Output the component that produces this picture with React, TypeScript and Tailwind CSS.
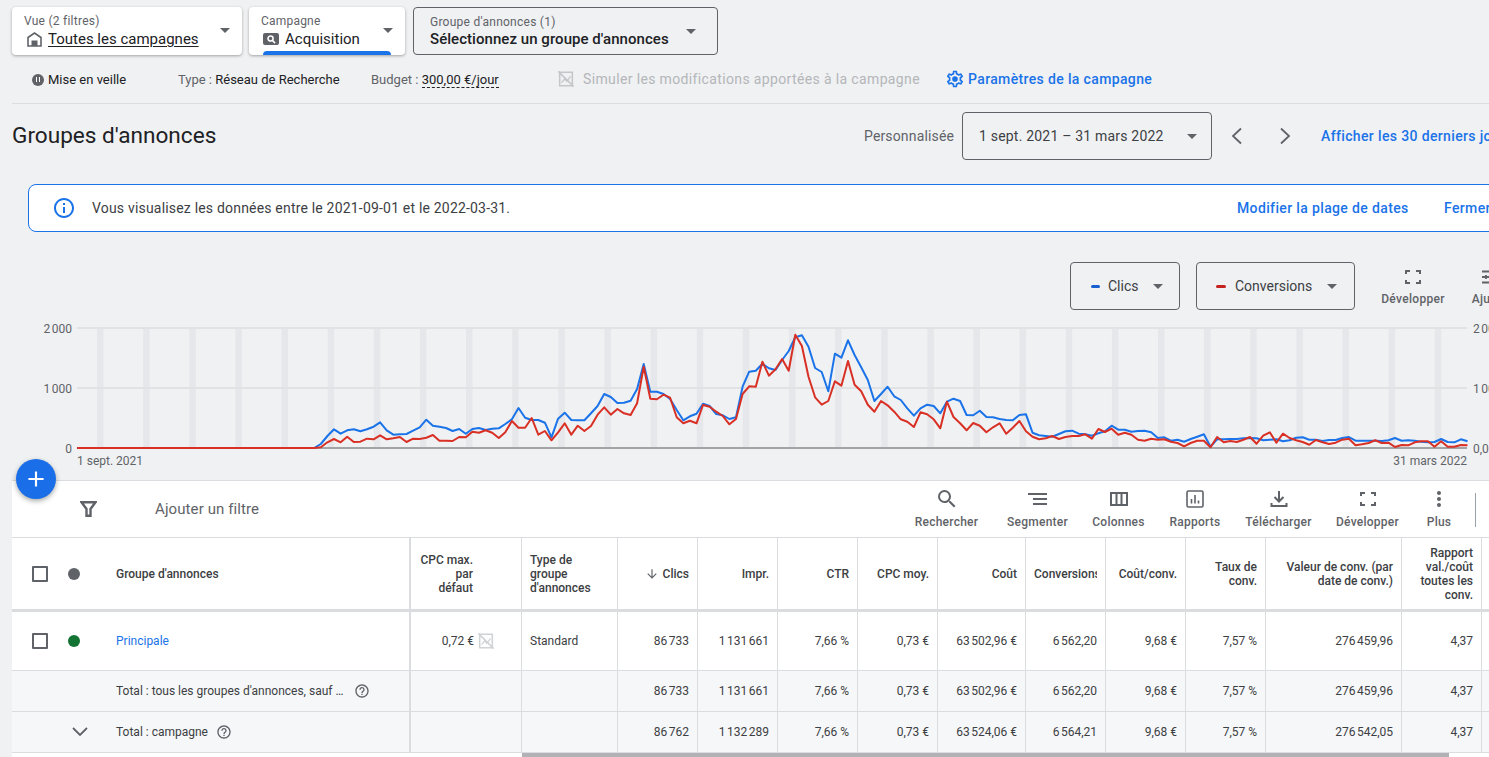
import React from "react";
import { MdSearch, MdMoreVert, MdInfoOutline, MdHelpOutline, MdOutlineAdd, MdArrowDownward } from "react-icons/md";

const blueTop = [384,372,348,328,341,331,328,334,328,320,307,331,344,343,342,332,322,299,317,320,324,333,327,341,327,324,330,326,325,312,298,264,293,300,300,308,352,296,278,300,301,301,280,258,222,231,249,248,242,207,132,215,215,222,237,270,301,289,281,251,258,282,286,297,292,200,155,152,131,145,150,120,93,52,46,80,144,156,214,101,113,61,105,142,180,243,222,200,229,240,265,287,265,254,258,280,245,236,243,285,286,272,291,292,297,300,301,285,283,338,346,348,350,342,334,332,341,343,347,340,334,317,329,329,335,333,332,337,354,352,362,359,365,357,350,343,380,358,358,357,357,355,354,355,361,359,358,364,361,353,352,359,359,363,360,360,354,351,362,362,362,362,363,361,354,362,361,362,365,367,366,357,366,367,358,364];
const redTop = [384,382,367,357,367,350,366,365,356,358,346,358,355,351,366,356,357,353,345,362,362,363,351,352,335,338,331,338,354,337,303,323,323,294,344,333,361,337,310,344,317,333,318,284,262,284,267,280,285,250,140,236,238,224,233,292,310,302,310,255,260,275,288,313,297,222,199,200,125,167,148,117,152,44,78,170,232,254,243,184,197,123,194,214,254,275,243,256,275,298,305,321,277,283,298,325,245,291,310,331,309,317,337,322,310,341,323,303,334,350,358,355,348,357,351,348,348,343,356,327,336,326,344,338,344,359,362,356,359,358,365,369,379,369,362,362,382,351,367,363,366,359,351,371,347,337,368,341,354,361,366,374,360,367,372,368,359,356,376,373,369,361,369,368,381,375,376,367,364,364,380,364,380,380,375,376];

const toPoints = (vals: number[]) => {
  const flat = "77,128 ";
  return flat + vals.map((v, i) => `${(77 + (i + 36) * 6.59).toFixed(1)},${(v / 3).toFixed(1)}`).join(" ");
};

const Caret = ({ className = "" }: { className?: string }) => (
  <svg width="10" height="5" viewBox="0 0 10 5" className={`shrink-0 ${className}`}><path d="M0 0h10L5 5z" fill="#5f6368" /></svg>
);

const NoSim = ({ size = 18, color = "#c4c7ca" }: { size?: number; color?: string }) => (
  <svg width={size} height={size} viewBox="0 0 20 20" fill="none" stroke={color} strokeWidth="1.7" className="shrink-0">
    <path d="M3 2.500h14v15H3z" />
    <path d="M1.500 1.500l17 17" />
    <path d="M5 14l3.500-4 2.500 2.500L15 7" strokeWidth="1.4" />
  </svg>
);

const Expand = () => (
  <svg width="18" height="18" viewBox="0 0 18 18" fill="none" stroke="#5f6368" strokeWidth="2" className="shrink-0">
    <path d="M2 6V3h4M12 3h4v3M16 12v3h-4M6 15H2v-3" />
  </svg>
);

const Gear = () => (
  <svg width="20" height="20" viewBox="0 0 24 24" fill="#1a73e8" className="shrink-0">
    <path d="M19.43 12.98c.04-.32.07-.64.07-.98 0-.34-.03-.66-.07-.98l2.11-1.65c.19-.15.24-.42.12-.64l-2-3.46c-.09-.16-.26-.25-.44-.25-.06 0-.12.01-.17.03l-2.49 1c-.52-.4-1.08-.73-1.69-.98l-.38-2.65C14.46 2.18 14.25 2 14 2h-4c-.25 0-.46.18-.49.42l-.38 2.65c-.61.25-1.17.59-1.69.98l-2.49-1c-.06-.02-.12-.03-.18-.03-.17 0-.34.09-.43.25l-2 3.46c-.13.22-.07.49.12.64l2.11 1.65c-.04.32-.07.65-.07.98 0 .33.03.66.07.98l-2.11 1.65c-.19.15-.24.42-.12.64l2 3.46c.09.16.26.25.44.25.06 0 .12-.01.17-.03l2.49-1c.52.4 1.08.73 1.69.98l.38 2.65c.03.24.24.42.49.42h4c.25 0 .46-.18.49-.42l.38-2.65c.61-.25 1.17-.59 1.69-.98l2.49 1c.06.02.12.03.18.03.17 0 .34-.09.43-.25l2-3.46c.12-.22.07-.49-.12-.64l-2.11-1.65zm-1.98-1.71c.04.31.05.52.05.73 0 .21-.02.43-.05.73l-.14 1.13.89.7 1.08.84-.7 1.21-1.27-.51-1.04-.42-.9.68c-.43.32-.84.56-1.25.73l-1.06.43-.16 1.13-.2 1.35h-1.4l-.19-1.35-.16-1.13-1.06-.43c-.43-.18-.83-.41-1.23-.71l-.91-.7-1.06.43-1.27.51-.7-1.21 1.08-.84.89-.7-.14-1.13c-.03-.31-.05-.54-.05-.74s.02-.43.05-.73l.14-1.13-.89-.7-1.08-.84.7-1.21 1.27.51 1.04.42.9-.68c.43-.32.84-.56 1.25-.73l1.06-.43.16-1.13.2-1.35h1.39l.19 1.35.16 1.13 1.06.43c.43.18.83.41 1.23.71l.91.7 1.06-.43 1.27-.51.7 1.21-1.07.85-.89.7.14 1.13z" />
    <circle cx="12" cy="12" r="3.400" />
  </svg>
);

const Tool = ({ icon, label, w }: { icon: React.ReactNode; label: string; w: string }) => (
  <div className={`flex shrink-0 flex-col items-center ${w}`}>
    <div className="flex h-[24px] items-center justify-center">{icon}</div>
    <div className="mt-[4px] whitespace-nowrap text-[12px] font-medium leading-[14px] tracking-[0.25px] text-[#5f6368]">{label}</div>
  </div>
);

const gridCols = "grid grid-cols-[399px_111px_96px_80px_80px_80px_80px_88px_80px_80px_80px_136px_80px_8px]";

const Cell = ({ children, left = false }: { children?: React.ReactNode; left?: boolean }) => (
  <div className={`flex items-center overflow-hidden whitespace-nowrap border-r border-[#dadce0] px-2 ${left ? "justify-start" : "justify-end"}`}>
    {children}
  </div>
);

const Head = ({ children, left = false, pad = "" }: { children?: React.ReactNode; left?: boolean; pad?: string }) => (
  <div className={`flex items-center overflow-hidden border-r border-[#dadce0] px-2 text-[12px] font-medium leading-[14px] text-[#3c4043] ${left ? "justify-start text-left" : "justify-end text-right"} ${pad}`}>
    {children}
  </div>
);

const Checkbox = () => <div className="h-[16px] w-[16px] rounded-[1px] border-2 border-[#5f6368] bg-white" />;

const Help = () => <MdHelpOutline size={16} color="#5f6368" />;

const NNBSP = "\u202f";

const Metrics = ({ v }: { v: string[] }) => (
  <>
    {v.map((t, i) => (
      <Cell key={i}>{t.replace(/_/g, NNBSP)}</Cell>
    ))}
    <div />
  </>
);

export default function App() {
  const bars = Array.from({ length: 30 }, (_, i) => 97 + i * 46.13);
  return (
    <div className="relative h-[757px] w-[1489px] overflow-hidden bg-[#f0f1f3] text-[#3c4043]" style={{ fontFamily: "Roboto, 'Noto Sans', sans-serif" }}>
      {/* Selector row */}
      <div className="flex h-[55px] items-end pl-3">
        <div className="flex h-[48px] w-[230px] shrink-0 justify-between rounded-[4px] bg-white pl-3 pr-[12px] pt-[7px] shadow-[0_1px_3px_rgba(60,64,67,0.45)]">
          <div>
            <div className="text-[12px] leading-[14px] tracking-[0.25px] text-[#5f6368]">Vue (2 filtres)</div>
            <div className="mt-[1px] flex items-center text-[15px] leading-[20px] text-[#202124]">
              <svg width="15" height="15" viewBox="0 0 15 15" className="ml-[3px] mr-[6px] shrink-0">
                <path d="M1 14V5.500L7.500 1 14 5.500V14z" fill="none" stroke="#5f6368" strokeWidth="1.600" />
                <path d="M4.500 14V8.500h6V14z" fill="#5f6368" />
              </svg>
              <span className="underline underline-offset-2">Toutes les campagnes</span>
            </div>
          </div>
          <Caret className="mt-[14px]" />
        </div>
        <div className="relative ml-[7px] flex h-[48px] w-[156px] shrink-0 justify-between rounded-[4px] bg-white pl-3 pr-[12px] pt-[7px] shadow-[0_1px_3px_rgba(60,64,67,0.45)]">
          <div>
            <div className="text-[12px] leading-[14px] tracking-[0.2px] text-[#5f6368]">Campagne</div>
            <div className="mt-[1px] flex items-center text-[15px] leading-[20px] text-[#202124]">
              <span className="ml-[2px] mr-[6px] flex h-[12px] w-[16px] shrink-0 items-center justify-center rounded-[2px] bg-[#5f6368]">
                <svg width="10" height="10" viewBox="0 0 11 11" fill="none" stroke="#fff" strokeWidth="1.700"><circle cx="5" cy="5" r="2.800" /><path d="M7 7l3 3" /></svg>
              </span>
              Acquisition
            </div>
          </div>
          <Caret className="mt-[14px]" />
          <div className="absolute bottom-0 left-[14px] h-[4px] w-[128px] rounded-t-[4px] bg-[#1a73e8]" />
        </div>
        <div className="ml-[8px] flex h-[48px] w-[305px] shrink-0 justify-between rounded-[4px] border border-[#5f6368] pl-4 pr-[16px] pt-[7px]">
          <div>
            <div className="text-[12px] leading-[14px] tracking-[0.25px] text-[#5f6368]">Groupe d'annonces (1)</div>
            <div className="whitespace-nowrap text-[15px] font-medium leading-[20px] tracking-[0.05px] text-[#202124]">Sélectionnez un groupe d'annonces</div>
          </div>
          <Caret className="mr-[5px] mt-[14px]" />
        </div>
      </div>

      {/* Status row */}
      <div className="ml-3 flex h-[49px] items-center border-b border-[#dadce0] text-[13px]">
        <div className="ml-[20px] mt-[1px] flex w-[146px] shrink-0 items-center gap-[4px] text-[#202124]">
          <span className="flex h-[12px] w-[12px] items-center justify-center rounded-full bg-[#5f6368]">
            <span className="h-[5px] w-[4px] border-x border-white" />
          </span>
          Mise en veille
        </div>
        <div className="mt-[1px] w-[193px] shrink-0 whitespace-nowrap text-[#5f6368]">Type : <span className="text-[#202124]">Réseau de Recherche</span></div>
        <div className="mt-[1px] w-[186px] shrink-0 whitespace-nowrap text-[#5f6368]">Budget : <span className="border-b border-dashed border-[#202124] text-[#202124]">300,00 €/jour</span></div>
        <div className="flex w-[388px] shrink-0 items-center gap-[8px] whitespace-nowrap text-[14px] tracking-[0.36px] text-[#b4b6b9]">
          <NoSim /> Simuler les modifications apportées à la campagne
        </div>
        <div className="flex items-center gap-[3px] whitespace-nowrap text-[14px] font-medium tracking-[0.36px] text-[#1a73e8]">
          <Gear /> Paramètres de la campagne
        </div>
      </div>

      {/* Title row */}
      <div className="ml-3 mt-[8px] flex h-[48px] items-center">
        <div className="w-[852px] shrink-0 text-[22.6px] leading-[28px] text-[#202124]">Groupes d'annonces</div>
        <div className="w-[98px] shrink-0 whitespace-nowrap text-[14px] tracking-[0.15px] text-[#5f6368]">Personnalisée</div>
        <div className="flex h-[48px] w-[250px] shrink-0 items-center justify-between rounded-[4px] border border-[#5f6368] pl-4 pr-[14px] text-[14px] tracking-[0.2px] text-[#3c4043]">
          1 sept. 2021 – 31 mars 2022
          <Caret />
        </div>
        <svg width="12" height="18" viewBox="0 0 12 18" fill="none" stroke="#5f6368" strokeWidth="1.800" className="ml-[19px] shrink-0"><path d="M10 1.500L2 9l8 7.500" /></svg>
        <svg width="12" height="18" viewBox="0 0 12 18" fill="none" stroke="#5f6368" strokeWidth="1.800" className="ml-[36px] shrink-0"><path d="M2 1.500L10 9l-8 7.500" /></svg>
        <div className="ml-[30px] shrink-0 whitespace-nowrap text-[14px] font-medium tracking-[0.36px] text-[#1a73e8]">Afficher les 30 derniers jours</div>
      </div>

      {/* Banner */}
      <div className="ml-[28px] mt-[24px] flex h-[48px] w-[1500px] items-center rounded-[8px] border border-[#1a73e8] bg-white">
        <MdInfoOutline size={24} color="#1a73e8" className="ml-[23px] shrink-0" />
        <div className="ml-[16px] w-[1145px] shrink-0 text-[14px] tracking-[0.19px] text-[#3c4043]">Vous visualisez les données entre le 2021-09-01 et le 2022-03-31.</div>
        <div className="w-[207px] shrink-0 whitespace-nowrap text-[14px] font-medium tracking-[0.36px] text-[#1a73e8]">Modifier la plage de dates</div>
        <div className="shrink-0 whitespace-nowrap text-[14px] font-medium tracking-[0.36px] text-[#1a73e8]">Fermer</div>
      </div>

      {/* Chart controls */}
      <div className="mt-[30px] flex h-[48px] pl-[1070px]">
        <div className="flex h-[48px] w-[110px] shrink-0 items-center rounded-[4px] border border-[#5f6368] pl-[20px] text-[14px] text-[#3c4043]">
          <span className="mr-[8px] h-[3px] w-[9px] shrink-0 rounded-full bg-[#1a5fd0]" />
          Clics
          <Caret className="ml-[15px]" />
        </div>
        <div className="ml-[16px] flex h-[48px] w-[159px] shrink-0 items-center rounded-[4px] border border-[#5f6368] pl-[19px] text-[14px] text-[#3c4043]">
          <span className="mr-[9px] h-[3px] w-[10px] shrink-0 rounded-full bg-[#c5221f]" />
          Conversions
          <Caret className="ml-[15px]" />
        </div>
        <div className="ml-[26px] flex w-[64px] shrink-0 flex-col items-center">
          <div className="mt-[6px]"><Expand /></div>
          <div className="mt-[6px] whitespace-nowrap text-[12px] font-medium leading-[14px] tracking-[0.3px] text-[#5f6368]">Développer</div>
        </div>
        <div className="ml-[27px] flex w-[46px] shrink-0 -translate-x-[3px] flex-col items-center">
          <svg width="18" height="18" viewBox="0 0 18 18" fill="none" stroke="#5f6368" strokeWidth="1.800" className="mt-[6px] -ml-[6px] shrink-0"><path d="M2 3.500h14M2 9h14M2 14.500h14M6 7v4" /></svg>
          <div className="mt-[6px] whitespace-nowrap text-[12px] font-medium leading-[14px] tracking-[0.3px] text-[#5f6368]">Ajuster</div>
        </div>
      </div>

      {/* Chart */}
      <svg width="1489" height="170" viewBox="0 0 1489 170" className="mt-[10px] block" style={{ fontFamily: "Roboto, sans-serif" }}>
        {bars.map((x) => (
          <rect key={x} x={x} y="8" width="6.500" height="120" fill="#e6e7ea" />
        ))}
        <path d="M77 8h1390M77 68h1390" stroke="#e1e2e4" strokeWidth="2" />
        <path d="M77 128h1390" stroke="#a3a4a6" strokeWidth="2" />
        <polyline points={toPoints(blueTop)} fill="none" stroke="#1a73e8" strokeWidth="2" strokeLinejoin="round" />
        <polyline points={toPoints(redTop)} fill="none" stroke="#d93025" strokeWidth="2" strokeLinejoin="round" />
        <g fontSize="12" fill="#5f6368">
          <text x="72" y="12.500" textAnchor="end">{`2${NNBSP}000`}</text>
          <text x="72" y="72.500" textAnchor="end">{`1${NNBSP}000`}</text>
          <text x="72" y="132.500" textAnchor="end">0</text>
          <text x="1473" y="12.500">{`2${NNBSP}000`}</text>
          <text x="1473" y="72.500">{`1${NNBSP}000`}</text>
          <text x="1473" y="132.500">0,00</text>
          <text x="77" y="145">1 sept. 2021</text>
          <text x="1467" y="145" textAnchor="end">31 mars 2022</text>
        </g>
      </svg>

      {/* FAB */}
      <div className="absolute left-[16px] top-[459px] z-10 flex h-[40px] w-[40px] items-center justify-center rounded-full bg-[#1a6fe8] shadow-[0_2px_5px_rgba(60,64,67,0.45)]">
        <MdOutlineAdd size={26} color="#fff" />
      </div>

      {/* Table card */}
      <div className="ml-3 -mt-[10px] bg-white text-[12px]">
        {/* Toolbar */}
        <div className="flex h-[58px] items-start border-y border-[#dadce0]">
          <div className="ml-[68px] mt-[20px] shrink-0">
            <svg width="17" height="16" viewBox="0 0 17 16" fill="none" stroke="#5f6368" strokeWidth="2.400" className="block"><path d="M1.500 1.200h14L10.500 8v6.800h-4V8z" /></svg>
          </div>
          <div className="ml-[58px] mt-[18px] w-[104px] shrink-0 whitespace-nowrap text-[15px] leading-[20px] tracking-[0.1px] text-[#5f6368]">Ajouter un filtre</div>
          <div className="ml-[655px] mt-[6px] flex shrink-0 items-start">
            <Tool w="w-[65px]" label="Rechercher" icon={<MdSearch size={24} color="#5f6368" />} />
            <div className="w-[28px] shrink-0" />
            <Tool w="w-[61px]" label="Segmenter" icon={
              <svg width="19" height="14" viewBox="0 0 19 14" stroke="#5f6368" strokeWidth="1.800"><path d="M0 2h19M5 7h14M5 12h14" /></svg>
            } />
            <div className="w-[24px] shrink-0" />
            <Tool w="w-[53px]" label="Colonnes" icon={
              <svg width="18" height="14" viewBox="0 0 18 14" fill="none" stroke="#5f6368" strokeWidth="2"><path d="M1 1h16v12H1zM6.500 1v12M11.500 1v12" /></svg>
            } />
            <div className="w-[24px] shrink-0" />
            <Tool w="w-[52px]" label="Rapports" icon={
              <svg width="18" height="18" viewBox="0 0 18 18" fill="none" stroke="#5f6368" strokeWidth="1.600"><rect x="1" y="1" width="16" height="16" rx="1.500" /><path d="M5.500 9v4.500M9 5v8.500M12.500 10.500v3" /></svg>
            } />
            <div className="w-[24px] shrink-0" />
            <Tool w="w-[67px]" label="Télécharger" icon={
              <svg width="20" height="20" viewBox="0 0 20 20" fill="none" stroke="#5f6368" strokeWidth="2"><path d="M10 2v10M5.500 8l4.500 4.500L14.500 8M2.500 14v3h15v-3" /></svg>
            } />
            <div className="w-[24px] shrink-0" />
            <Tool w="w-[63px]" label="Développer" icon={<Expand />} />
            <div className="w-[28px] shrink-0" />
            <Tool w="w-[24px]" label="Plus" icon={<MdMoreVert size={24} color="#5f6368" />} />
          </div>
          <div className="ml-[24px] mt-[12px] h-[34px] w-px shrink-0 bg-[#9aa0a6]" />
        </div>

        {/* Header */}
        <div className={`${gridCols} h-[74px] border-b-[3px] border-[#dadce0]`}>
          <div className="flex items-center border-r-2 border-[#dadce0]">
            <div className="ml-[20px]"><Checkbox /></div>
            <div className="ml-[20px] h-[12px] w-[12px] rounded-full bg-[#5f6368]" />
            <div className="ml-[36px] text-[12px] font-medium text-[#3c4043]">Groupe d'annonces</div>
          </div>
          <Head pad="pr-[48px]">CPC max.<br />par<br />défaut</Head>
          <Head left>Type de groupe d'annonces</Head>
          <Head><MdArrowDownward size={14} color="#5f6368" className="mr-[4px] shrink-0" />Clics</Head>
          <Head>Impr.</Head>
          <Head>CTR</Head>
          <Head>CPC moy.</Head>
          <Head>Coût</Head>
          <Head left><span className="block w-[63px] overflow-hidden whitespace-nowrap">Conversions</span></Head>
          <Head>Coût/conv.</Head>
          <Head>Taux de conv.</Head>
          <Head>Valeur de conv. (par date de conv.)</Head>
          <Head>Rapport val./coût toutes les conv.</Head>
          <div />
        </div>

        {/* Row */}
        <div className={`${gridCols} h-[59px] border-b border-[#dadce0] text-[#3c4043]`}>
          <div className="flex items-center border-r-2 border-[#dadce0]">
            <div className="ml-[20px]"><Checkbox /></div>
            <div className="ml-[20px] h-[12px] w-[12px] rounded-full bg-[#137333]" />
            <div className="ml-[36px] text-[#1a73e8]">Principale</div>
          </div>
          <div className="flex items-center justify-end overflow-hidden whitespace-nowrap border-r border-[#dadce0] pr-[26px]">
            0,72 € <span className="ml-[3px]"><NoSim size={18} color="#d0d2d4" /></span>
          </div>
          <Cell left>Standard</Cell>
          <Metrics v={["86_733", "1_131_661", "7,66 %", "0,73 €", "63_502,96 €", "6_562,20", "9,68 €", "7,57 %", "276_459,96", "4,37"]} />
        </div>

        {/* Total 1 */}
        <div className={`${gridCols} h-[41px] border-b border-[#dadce0] bg-[#f6f7f9]`}>
          <div className="flex items-center border-r-2 border-[#dadce0] pl-[104px]">
            <span className="whitespace-nowrap">Total : tous les groupes d'annonces, sauf …</span>
            <span className="ml-[11px]"><Help /></span>
          </div>
          <Cell /><Cell />
          <Metrics v={["86_733", "1_131_661", "7,66 %", "0,73 €", "63_502,96 €", "6_562,20", "9,68 €", "7,57 %", "276_459,96", "4,37"]} />
        </div>

        {/* Total 2 */}
        <div className={`${gridCols} h-[41px] border-b border-[#dadce0] bg-[#f6f7f9]`}>
          <div className="flex items-center border-r-2 border-[#dadce0]">
            <svg width="16" height="10" viewBox="0 0 16 10" fill="none" stroke="#5f6368" strokeWidth="1.800" className="ml-[60px] shrink-0"><path d="M1 1l7 7 7-7" /></svg>
            <span className="ml-[28px] whitespace-nowrap">Total : campagne</span>
            <span className="ml-[8px]"><Help /></span>
          </div>
          <Cell /><Cell />
          <Metrics v={["86_762", "1_132_289", "7,66 %", "0,73 €", "63_524,06 €", "6_564,21", "9,68 €", "7,57 %", "276_542,05", "4,37"]} />
        </div>

        {/* Scrollbar */}
        <div className="flex h-[5px] bg-white">
          <div className="ml-[510px] h-[5px] w-[927px] bg-[#b0b2b5]" />
        </div>
      </div>
    </div>
  );
}
